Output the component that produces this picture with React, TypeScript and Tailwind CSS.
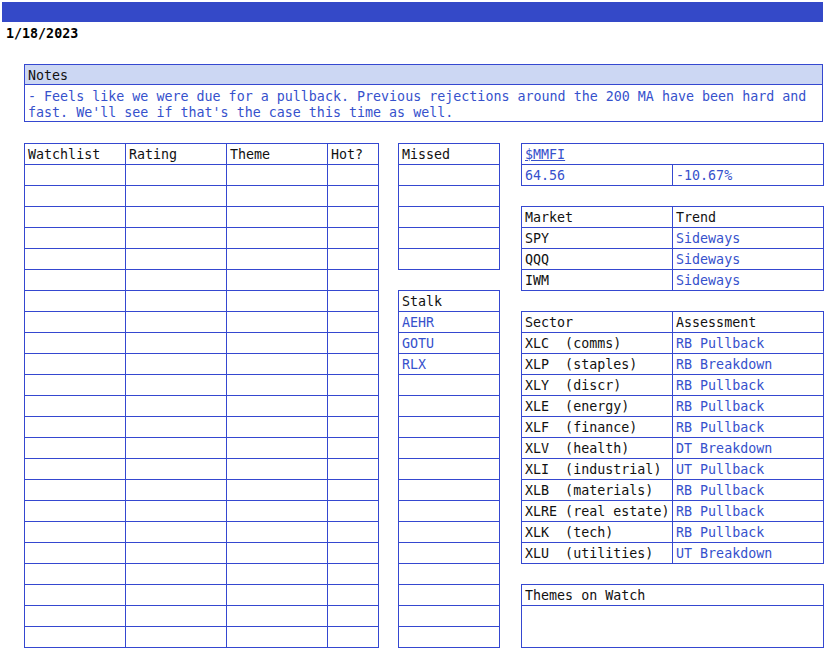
import React from 'react';

const line = 'bg-[#3548d0]';
const head = 'bg-[#ccd7f3] text-[#111]';
const blue = 'text-[#3651cc]';

type CellProps = { children?: React.ReactNode; className?: string };

const Cell: React.FC<CellProps> = ({ children, className = '' }) => (
  <div className={`h-5 leading-5 pt-px px-[3px] whitespace-pre overflow-hidden bg-white ${className}`}>{children}</div>
);

const Grid: React.FC<{ cols: string; children: React.ReactNode }> = ({ cols, children }) => (
  <div className={`grid ${cols} gap-px p-px w-max ${line}`}>{children}</div>
);

const sectors = [
  ['XLC  (comms)', 'RB Pullback'],
  ['XLP  (staples)', 'RB Breakdown'],
  ['XLY  (discr)', 'RB Pullback'],
  ['XLE  (energy)', 'RB Pullback'],
  ['XLF  (finance)', 'RB Pullback'],
  ['XLV  (health)', 'DT Breakdown'],
  ['XLI  (industrial)', 'UT Pullback'],
  ['XLB  (materials)', 'RB Pullback'],
  ['XLRE (real estate)', 'RB Pullback'],
  ['XLK  (tech)', 'RB Pullback'],
  ['XLU  (utilities)', 'UT Breakdown'],
];

const markets = ['SPY', 'QQQ', 'IWM'];
const stalk = ['AEHR', 'GOTU', 'RLX'];

export default function App() {
  return (
    <div className="w-[825px] h-[650px] bg-white pt-[2px] text-[13.33px] text-[#111] font-['DejaVu_Sans_Mono','Liberation_Mono',monospace] overflow-hidden">
      <div className="mx-[2px] h-5 bg-[#3449c8]" />
      <div className="pl-[6px] h-[21px] leading-[21px] pt-px font-bold text-black">1/18/2023</div>

      <div className="ml-[24px] mt-[21px] w-[799px] border border-[#3548d0]">
        <div className={`h-5 leading-5 pt-px px-[3px] border-b border-[#3548d0] ${head}`}>Notes</div>
        <div className={`px-[3px] pt-[4px] leading-4 bg-white ${blue}`}>
          - Feels like we were due for a pullback. Previous rejections around the 200 MA have been hard and
          <br />
          fast. We'll see if that's the case this time as well.
        </div>
      </div>

      <div className="flex items-start pl-[24px] mt-[21px]">
        <Grid cols="grid-cols-[100px_100px_100px_50px]">
          <Cell className={head}>Watchlist</Cell>
          <Cell className={head}>Rating</Cell>
          <Cell className={head}>Theme</Cell>
          <Cell className={head}>Hot?</Cell>
          {Array.from({ length: 23 * 4 }).map((_, i) => (
            <Cell key={i} />
          ))}
        </Grid>

        <div className="ml-[19px] flex flex-col gap-5">
          <Grid cols="grid-cols-[100px]">
            <Cell className={head}>Missed</Cell>
            {Array.from({ length: 5 }).map((_, i) => (
              <Cell key={i} />
            ))}
          </Grid>
          <Grid cols="grid-cols-[100px]">
            <Cell className={head}>Stalk</Cell>
            {stalk.map((s) => (
              <Cell key={s} className={blue}>{s}</Cell>
            ))}
            {Array.from({ length: 13 }).map((_, i) => (
              <Cell key={i} />
            ))}
          </Grid>
        </div>

        <div className="ml-[21px] flex flex-col gap-5">
          <Grid cols="grid-cols-[150px_150px]">
            <Cell className={`${head} col-span-2`}>
              <span className={`${blue} underline`}>$MMFI</span>
            </Cell>
            <Cell className={blue}>64.56</Cell>
            <Cell className={blue}>-10.67%</Cell>
          </Grid>

          <Grid cols="grid-cols-[150px_150px]">
            <Cell className={head}>Market</Cell>
            <Cell className={head}>Trend</Cell>
            {markets.map((m) => (
              <React.Fragment key={m}>
                <Cell>{m}</Cell>
                <Cell className={blue}>Sideways</Cell>
              </React.Fragment>
            ))}
          </Grid>

          <Grid cols="grid-cols-[150px_150px]">
            <Cell className={head}>Sector</Cell>
            <Cell className={head}>Assessment</Cell>
            {sectors.map(([s, a]) => (
              <React.Fragment key={s}>
                <Cell>{s}</Cell>
                <Cell className={blue}>{a}</Cell>
              </React.Fragment>
            ))}
          </Grid>

          <Grid cols="grid-cols-[301px]">
            <Cell className={head}>Themes on Watch</Cell>
            <div className="h-[41px] bg-white" />
          </Grid>
        </div>
      </div>
    </div>
  );
}
